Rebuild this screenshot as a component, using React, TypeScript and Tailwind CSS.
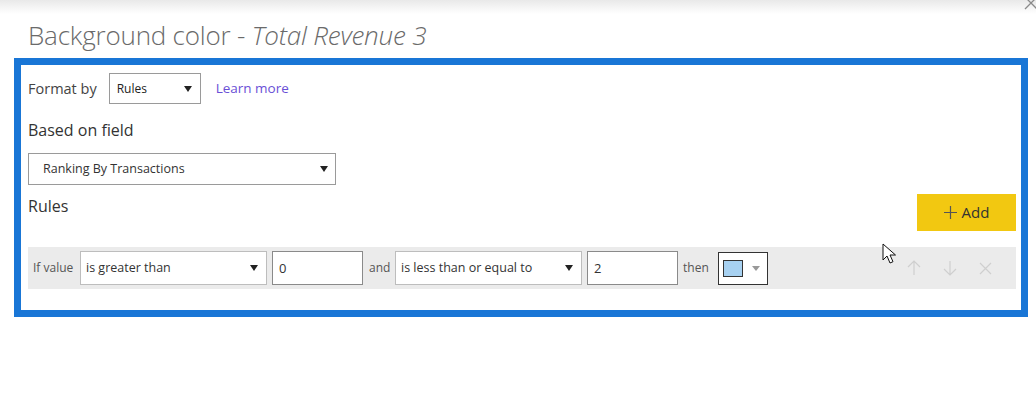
import React from "react";

const font = "font-['Open_Sans','Noto_Sans',sans-serif]";

const Caret = () => (
  <svg width="8" height="6" viewBox="0 0 8 6" className="shrink-0">
    <path d="M0 0h8L4 6z" fill="#222" />
  </svg>
);

const Select = ({ label, width, textSize = "text-[12.5px]" }: { label: string; width: string; textSize?: string }) => (
  <div className={`${width} flex items-center justify-between bg-white border border-[#bdbdbd] pl-[5px] pr-[8px] h-full`}>
    <span className={`${textSize} text-[#333] leading-none`}>{label}</span>
    <Caret />
  </div>
);

const NumInput = ({ value }: { value: string }) => (
  <div className="w-[91px] h-[34px] flex items-center bg-white border border-[#8a8a8a] pl-[6px]">
    <span className="text-[13px] text-[#333] leading-none">{value}</span>
  </div>
);

const Cursor = () => (
  <svg width="14" height="22" viewBox="0 0 14 22" className="absolute left-[882px] top-[243px]">
    <path d="M1 1v16l4-4 3 7 3-1.3-3-6.7h5.5z" fill="#fff" stroke="#111" strokeWidth="1" strokeLinejoin="round" />
  </svg>
);

export default function App() {
  return (
    <div className={`relative w-[1036px] h-[394px] overflow-hidden bg-white ${font}`}>
      <div className="h-[14px] bg-gradient-to-b from-[#e9e9e9] to-white" />
      <svg width="14" height="14" viewBox="0 0 14 14" className="absolute left-[1024px] top-[-4px]">
        <path d="M1 1l12 12M13 1L1 13" stroke="#8a8a8a" strokeWidth="1.3" />
      </svg>

      <h1 className="pl-[28px] pt-[5px] text-[26px] leading-[32px] font-light text-[#6a6a6a] tracking-[-0.2px]">
        Background color - <span className="italic">Total Revenue 3</span>
      </h1>

      <div className="mt-[7px] ml-[14px] w-[1014px] border-[7px] border-[#1976d6] pl-[7px] pr-[5px] pt-[8px] pb-[21px]">
        <div className="flex items-center h-[31px]">
          <span className="text-[14.5px] text-[#444]">Format by</span>
          <div className="ml-[12px] h-[31px]">
            <div className="w-[92px] h-full flex items-center justify-between bg-white border border-[#9a9a9a] pl-[7px] pr-[8px]">
              <span className="text-[12px] text-[#222] leading-none">Rules</span>
              <Caret />
            </div>
          </div>
          <span className="ml-[15px] text-[13.5px] text-[#6a4fd6]">Learn more</span>
        </div>

        <div className="mt-[16px] text-[16px] leading-[20px] text-[#333]">Based on field</div>

        <div className="mt-[13px] w-[308px] h-[32px] flex items-center justify-between border border-[#9a9a9a] pl-[14px] pr-[7px]">
          <span className="text-[12.5px] text-[#333] leading-none">Ranking By Transactions</span>
          <Caret />
        </div>

        <div className="mt-[9px] flex items-start justify-between">
          <span className="text-[16px] leading-[20px] text-[#333] pt-[2px]">Rules</span>
          <button className="w-[99px] h-[37px] bg-[#f2c811] flex items-center justify-center gap-[5px] text-[15px] text-[#333]">
            <svg width="13" height="13" viewBox="0 0 13 13">
              <path d="M6.5 0v13M0 6.5h13" stroke="#555" strokeWidth="1.2" />
            </svg>
            Add
          </button>
        </div>

        <div className="mt-[16px] h-[42px] bg-[#ebebeb] flex items-center pl-[5px] pr-[24px]">
          <span className="text-[12px] text-[#555] w-[45px]">If value</span>
          <div className="ml-[2px] h-[34px]">
            <Select label="is greater than" width="w-[187px]" />
          </div>
          <div className="ml-[5px]">
            <NumInput value="0" />
          </div>
          <span className="ml-[6px] w-[21px] text-[12px] text-[#555]">and</span>
          <div className="ml-[5px] h-[34px]">
            <Select label="is less than or equal to" width="w-[187px]" />
          </div>
          <div className="ml-[5px]">
            <NumInput value="2" />
          </div>
          <span className="ml-[5px] w-[30px] text-[12px] text-[#555]">then</span>
          <div className="ml-[5px] w-[50px] h-[33px] bg-white border-[1.5px] border-[#333] flex items-center pl-[4px] gap-[9px]">
            <div className="w-[20px] h-[17px] bg-[#a7d1f1] border border-[#333]" />
            <svg width="8" height="5" viewBox="0 0 8 5">
              <path d="M0 0h8L4 5z" fill="#999" />
            </svg>
          </div>
          <div className="ml-auto flex items-center gap-[22px]">
            <svg width="14" height="16" viewBox="0 0 14 16">
              <path d="M7 15V1M1 7l6-6 6 6" fill="none" stroke="#cfcfcf" strokeWidth="1.2" />
            </svg>
            <svg width="14" height="16" viewBox="0 0 14 16">
              <path d="M7 1v14M1 9l6 6 6-6" fill="none" stroke="#cfcfcf" strokeWidth="1.2" />
            </svg>
            <svg width="13" height="13" viewBox="0 0 13 13">
              <path d="M1 1l11 11M12 1L1 12" stroke="#cfcfcf" strokeWidth="1.2" />
            </svg>
          </div>
        </div>
      </div>

      <Cursor />
    </div>
  );
}
